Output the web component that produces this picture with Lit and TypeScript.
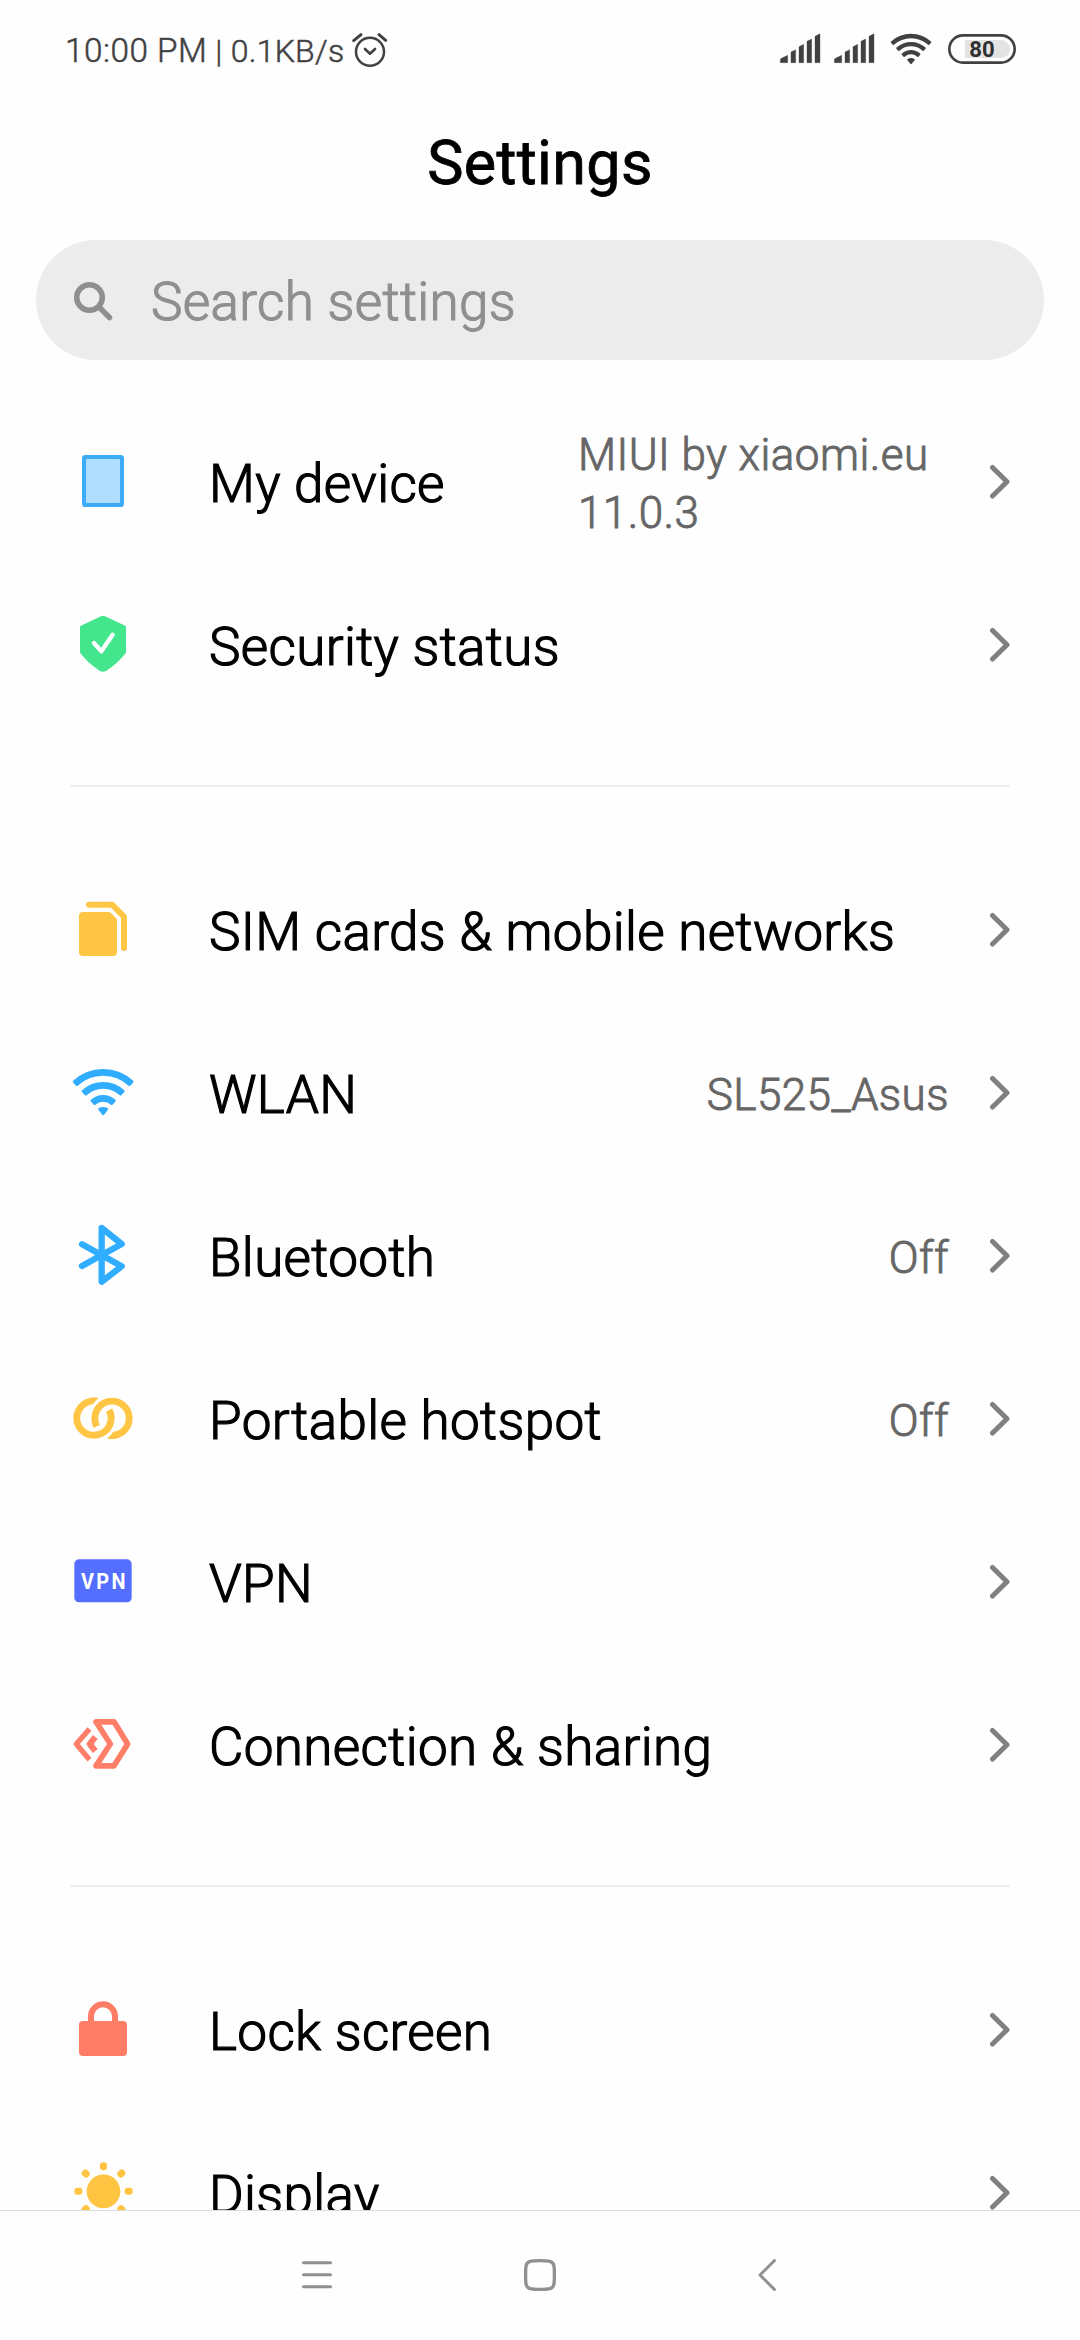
import { LitElement, html, svg, css, TemplateResult, SVGTemplateResult } from "lit";
import { customElement, property } from "lit/decorators.js";

/** Outline of a ring slice centred on the upward vertical. */
function sector(cx: number, cy: number, r1: number, r2: number, deg: number): string {
  const a = (deg * Math.PI) / 180;
  const s = Math.sin(a);
  const c = Math.cos(a);
  const p = (r: number, k: number) => `${(cx + k * r * s).toFixed(2)} ${(cy - r * c).toFixed(2)}`;
  return `M${p(r2, -1)}A${r2} ${r2} 0 0 1 ${p(r2, 1)}L${p(r1, 1)}A${r1} ${r1} 0 0 0 ${p(r1, -1)}Z`;
}

interface Icon {
  top: number;
  art: SVGTemplateResult;
}

const RING = "M186.7 115A62 62 0 1 1 146 83.7A70 70 0 0 0 129 103.1A41.3 41.3 0 1 0 168.4 125Z";

const icons: Record<string, Icon> = {
  device: {
    top: 75,
    art: svg`<rect x="96" y="105" width="126" height="156" rx="10" fill="#3dabf5"/>
      <rect x="108" y="117" width="102" height="132" rx="4" fill="#b0deff"/>`,
  },
  security: {
    top: 564,
    art: svg`<path fill="#43e58d" d="M153 588.5Q159 585.500 165 588.500L224 616.500Q228 618.500 228 622V695Q228 699 225 702Q200 733 168 753Q159 758 150 753Q118 733 93 702Q90 699 90 695V622Q90 618.500 94 616.500Z"/>
      <path fill="none" stroke="#fff" stroke-width="13" stroke-linecap="round" stroke-linejoin="round" d="M132 669L154 694L188 644"/>`,
  },
  sim: {
    top: 39,
    art: svg`<path fill="none" stroke="#ffc545" stroke-width="18" stroke-linecap="round" stroke-linejoin="round" d="M117 74H186L222 110V204"/>
      <path fill="#ffc545" d="M99 96H175Q180 96 183 99L198 114Q201 117 201 122V216Q201 228 189 228H99Q87 228 87 216V108Q87 96 99 96Z"/>`,
  },
  wlan: {
    top: 528,
    art: svg`<g fill="#31adff" stroke="#31adff" stroke-width="7" stroke-linejoin="round">
      <path d=${sector(159.500, 699, 115.500, 128.500, 43)}/>
      <path d=${sector(159.500, 699, 76.500, 89.500, 43)}/>
      <path d=${sector(159.500, 699, 37.500, 50.500, 43)}/>
      <path d="M148 687Q159.500 682 171 687L159.500 702Z"/></g>`,
  },
  bluetooth: {
    top: 1017,
    art: svg`<path fill="none" stroke="#31adff" stroke-width="19" stroke-linecap="round" stroke-linejoin="round" d="M96 1093L215 1159L155 1205V1044L215 1092L96 1158"/>`,
  },
  hotspot: {
    top: 36,
    art: svg`<g fill="#ffc545"><path d=${RING}/><path d=${RING} transform="rotate(180 159 144.500)"/></g>`,
  },
  vpn: {
    top: 525,
    art: svg`<rect x="73" y="568" width="172" height="129" rx="14" fill="#546eff"/>
      <text class="vpn" transform="translate(93 657) scale(.89 1)" fill="#fff">VPN</text>`,
  },
  sharing: {
    top: 1014,
    art: svg`<g fill="none" stroke="#ff7e68" stroke-width="17" stroke-linejoin="round">
      <path d="M138 1055.500H192L233 1122L192 1187.500H138L181 1122Z"/>
      <path stroke-width="16" d="M118.500 1077L79 1122L118.500 1169"/>
      <path stroke-width="18" d="M136 1101L119 1122L136 1143"/></g>`,
  },
  lock: {
    top: 39,
    art: svg`<rect x="87" y="123" width="144" height="105" rx="12" fill="#ff7d67"/>
      <path fill="none" stroke="#ff7d67" stroke-width="18" d="M123 128V109A36 36 0 0 1 195 109V128"/>`,
  },
  display: {
    top: 528,
    art: svg`<g fill="#ffc442"><circle cx="160.500" cy="634" r="50.500"/>
      ${[0, 45, 90, 135, 180, 225, 270, 315].map(
        (a) => svg`<rect x="150" y="546.500" width="21" height="24" rx="9" transform=${`rotate(${a} 160.5 634)`}/>`
      )}</g>`,
  },
};

@customElement("settings-row")
class SettingsRow extends LitElement {
  @property() icon = "";
  @property() label = "";
  @property() value = "";

  static styles = css`
    :host {
      display: flex;
      align-items: center;
      height: 163px;
      flex: none;
      padding: 0 70px 0 67px;
      box-sizing: border-box;
    }
    .icon {
      width: 73px;
      height: 73px;
      flex: none;
      margin-right: 69px;
    }
    .vpn {
      font: 700 67px Roboto, sans-serif;
      letter-spacing: 8px;
    }
    .label {
      flex: 1;
      font-size: 53px;
      font-weight: 300;
      letter-spacing: 0.36px;
      -webkit-text-stroke: 1.2px #000;
      line-height: 62px;
      color: #000;
      padding-top: 4px;
      white-space: nowrap;
    }
    .value {
      max-width: 371px;
      font-size: 44px;
      font-weight: 300;
      letter-spacing: 0.45px;
      -webkit-text-stroke: 0.9px #666;
      line-height: 58px;
      color: #666;
      padding-top: 4px;
      margin-right: 40px;
    }
    .chevron {
      width: 21px;
      height: 37px;
      flex: none;
    }
  `;

  render(): TemplateResult {
    const icon = icons[this.icon];
    return html`
      <svg class="icon" viewBox=${`51 ${icon.top} 219 219`}>${icon.art}</svg>
      <span class="label">${this.label}</span>
      ${this.value ? html`<span class="value">${this.value}</span>` : ""}
      <svg class="chevron" viewBox="0 0 21 37">
        <path d="M3.500 4.500L18 18.700L3.500 33" fill="none" stroke="#808080" stroke-width="5" stroke-linecap="round" stroke-linejoin="round" />
      </svg>
    `;
  }
}

@customElement("status-bar")
class StatusBar extends LitElement {
  static styles = css`
    :host {
      display: flex;
      align-items: center;
      height: 100px;
      flex: none;
      box-sizing: border-box;
      padding: 0 64px 0 65px;
      color: #414141;
      font-weight: 300;
    }
    .texts {
      display: flex;
      align-items: baseline;
      width: 285px;
      padding-top: 1px;
      line-height: 40px;
      white-space: pre;
      -webkit-text-stroke: 0.5px #414141;
    }
    .time {
      font-size: 33.300px;
      letter-spacing: 0.5px;
    }
    .speed {
      font-size: 32px;
      letter-spacing: 0.25px;
    }
    .alarm {
      width: 40px;
      height: 40px;
    }
    .icons {
      margin-left: auto;
      width: 240px;
      height: 40px;
    }
    .level {
      font: 700 68px Roboto, sans-serif;
    }
  `;

  render(): TemplateResult {
    const bars = "M61 158V150Q61 147 64 145L83 136V158ZM93 158V126L107 119V158ZM117 158V110L131 103V158ZM141 158V94L155 87V158ZM165 158V79L178 72H180V158Z";
    return html`
      <div class="texts"><span class="time">10:00 PM</span><span class="speed"> | 0.1KB/s</span></div>
      <svg class="alarm" viewBox="930 60 120 120" fill="none" stroke="#414141" stroke-linecap="round" stroke-linejoin="round">
        <circle cx="990" cy="125" r="42" stroke-width="7.500" />
        <path stroke-width="8" d="M975 117L990 131L1005 117" />
        <path stroke-width="9" d="M941 92L963 74M1017 74L1037 91" />
      </svg>
      <svg class="icons" viewBox="48 60 720 120" fill="#414141">
        <g stroke="#414141" stroke-width="1" stroke-linejoin="round">
          <path d=${bars} />
          <path d=${bars} transform="translate(162 0)" />
        </g>
        <g stroke="#414141" stroke-width="5" stroke-linejoin="round">
          <path d=${sector(453, 161, 79, 87, 42)} />
          <path d=${sector(453, 161, 54.500, 62.500, 42)} />
          <path d=${sector(453, 161, 30.500, 38.500, 42)} />
          <path d="M444 149Q453 144 462 149L453 160Z" />
        </g>
        <path fill="#e3e3e3" d="M619 90H723A27 27 0 0 1 723 144H619Q615 144 615 140V94Q615 90 619 90Z" />
        <rect x="568" y="76" width="196" height="82" rx="41" fill="none" stroke="#414141" stroke-width="8" />
        <text class="level" x="628" y="142" textLength="76" lengthAdjust="spacingAndGlyphs" fill="#303030">80</text>
      </svg>
    `;
  }
}

type Row = [icon: string, label: string, value?: string];

const groups: Row[][] = [
  [
    ["device", "My device", "MIUI by xiaomi.eu 11.0.3"],
    ["security", "Security status"],
  ],
  [
    ["sim", "SIM cards & mobile networks"],
    ["wlan", "WLAN", "SL525_Asus"],
    ["bluetooth", "Bluetooth", "Off"],
    ["hotspot", "Portable hotspot", "Off"],
    ["vpn", "VPN"],
    ["sharing", "Connection & sharing"],
  ],
  [
    ["lock", "Lock screen"],
    ["display", "Display"],
  ],
];

@customElement("app-root")
class AppRoot extends LitElement {
  static styles = css`
    :host {
      display: flex;
      flex-direction: column;
      width: 1080px;
      height: 2340px;
      overflow: hidden;
      background: #fefefe;
      font-family: Roboto, "Noto Sans", sans-serif;
    }
    .title {
      margin: 0;
      height: 140px;
      flex: none;
      box-sizing: border-box;
      padding-top: 27px;
      text-align: center;
      font-size: 61px;
      line-height: 72px;
      font-weight: 400;
      letter-spacing: 0.35px;
      -webkit-text-stroke: 0.8px #000;
      color: #000;
    }
    .search {
      display: flex;
      align-items: center;
      flex: none;
      height: 120px;
      margin: 0 36px;
      padding-left: 36px;
      border-radius: 60px;
      background: #ececec;
      box-sizing: border-box;
      color: #8f8f8f;
      font-size: 53px;
      line-height: 62px;
    }
    .glass {
      width: 44px;
      height: 44px;
      margin-right: 35px;
    }
    .hint {
      padding-top: 4px;
      font-weight: 300;
      letter-spacing: 0.36px;
      -webkit-text-stroke: 1.2px #8f8f8f;
    }
    .list {
      flex: 1;
      min-height: 0;
      overflow: hidden;
      padding-top: 40px;
      display: flex;
      flex-direction: column;
    }
    .divider {
      flex: none;
      height: 2px;
      margin: 59px 70px 61px;
      background: #efefef;
    }
    .nav {
      flex: none;
      height: 130px;
      box-sizing: border-box;
      border-top: 1px solid #dcdcdc;
      display: flex;
      align-items: center;
      gap: 187px;
      padding-left: 299px;
    }
    .nav svg {
      width: 36px;
      height: 37px;
      fill: none;
      stroke: #909090;
      stroke-width: 3;
      stroke-linecap: round;
      stroke-linejoin: round;
    }
  `;

  render(): TemplateResult {
    return html`
      <status-bar></status-bar>
      <h1 class="title">Settings</h1>
      <div class="search">
        <svg class="glass" viewBox="72 278 44 44" fill="none" stroke="#8f8f8f" stroke-linecap="round">
          <circle cx="89.500" cy="297.500" r="12.800" stroke-width="5.500" />
          <path d="M99.500 307.500L109.500 317.500" stroke-width="5.500" />
        </svg>
        <span class="hint">Search settings</span>
      </div>
      <div class="list">
        ${groups.map(
          (rows, i) => html`
            ${i ? html`<div class="divider"></div>` : ""}
            ${rows.map(
              ([icon, label, value]) =>
                html`<settings-row .icon=${icon} .label=${label} .value=${value ?? ""}></settings-row>`
            )}
          `
        )}
      </div>
      <div class="nav">
        <svg viewBox="299 2257 36 37"><path d="M303.500 2262.700H330.500M303.500 2274.700H330.500M303.500 2286.700H330.500" /></svg>
        <svg viewBox="522 2257 36 37"><path stroke-width="3.300" d="M540 2260.600Q547 2260.600 550 2261.400Q553.500 2262.500 554 2266Q554.400 2269 554.400 2275Q554.400 2281 554 2284Q553.500 2287.500 550 2288.600Q547 2289.400 540 2289.400Q533 2289.400 530 2288.600Q526.500 2287.500 526 2284Q525.600 2281 525.600 2275Q525.600 2269 526 2266Q526.500 2262.500 530 2261.400Q533 2260.600 540 2260.600Z" /></svg>
        <svg viewBox="745 2257 36 37"><path d="M774.500 2260.500L760 2275L774.500 2289.500" /></svg>
      </div>
    `;
  }
}
